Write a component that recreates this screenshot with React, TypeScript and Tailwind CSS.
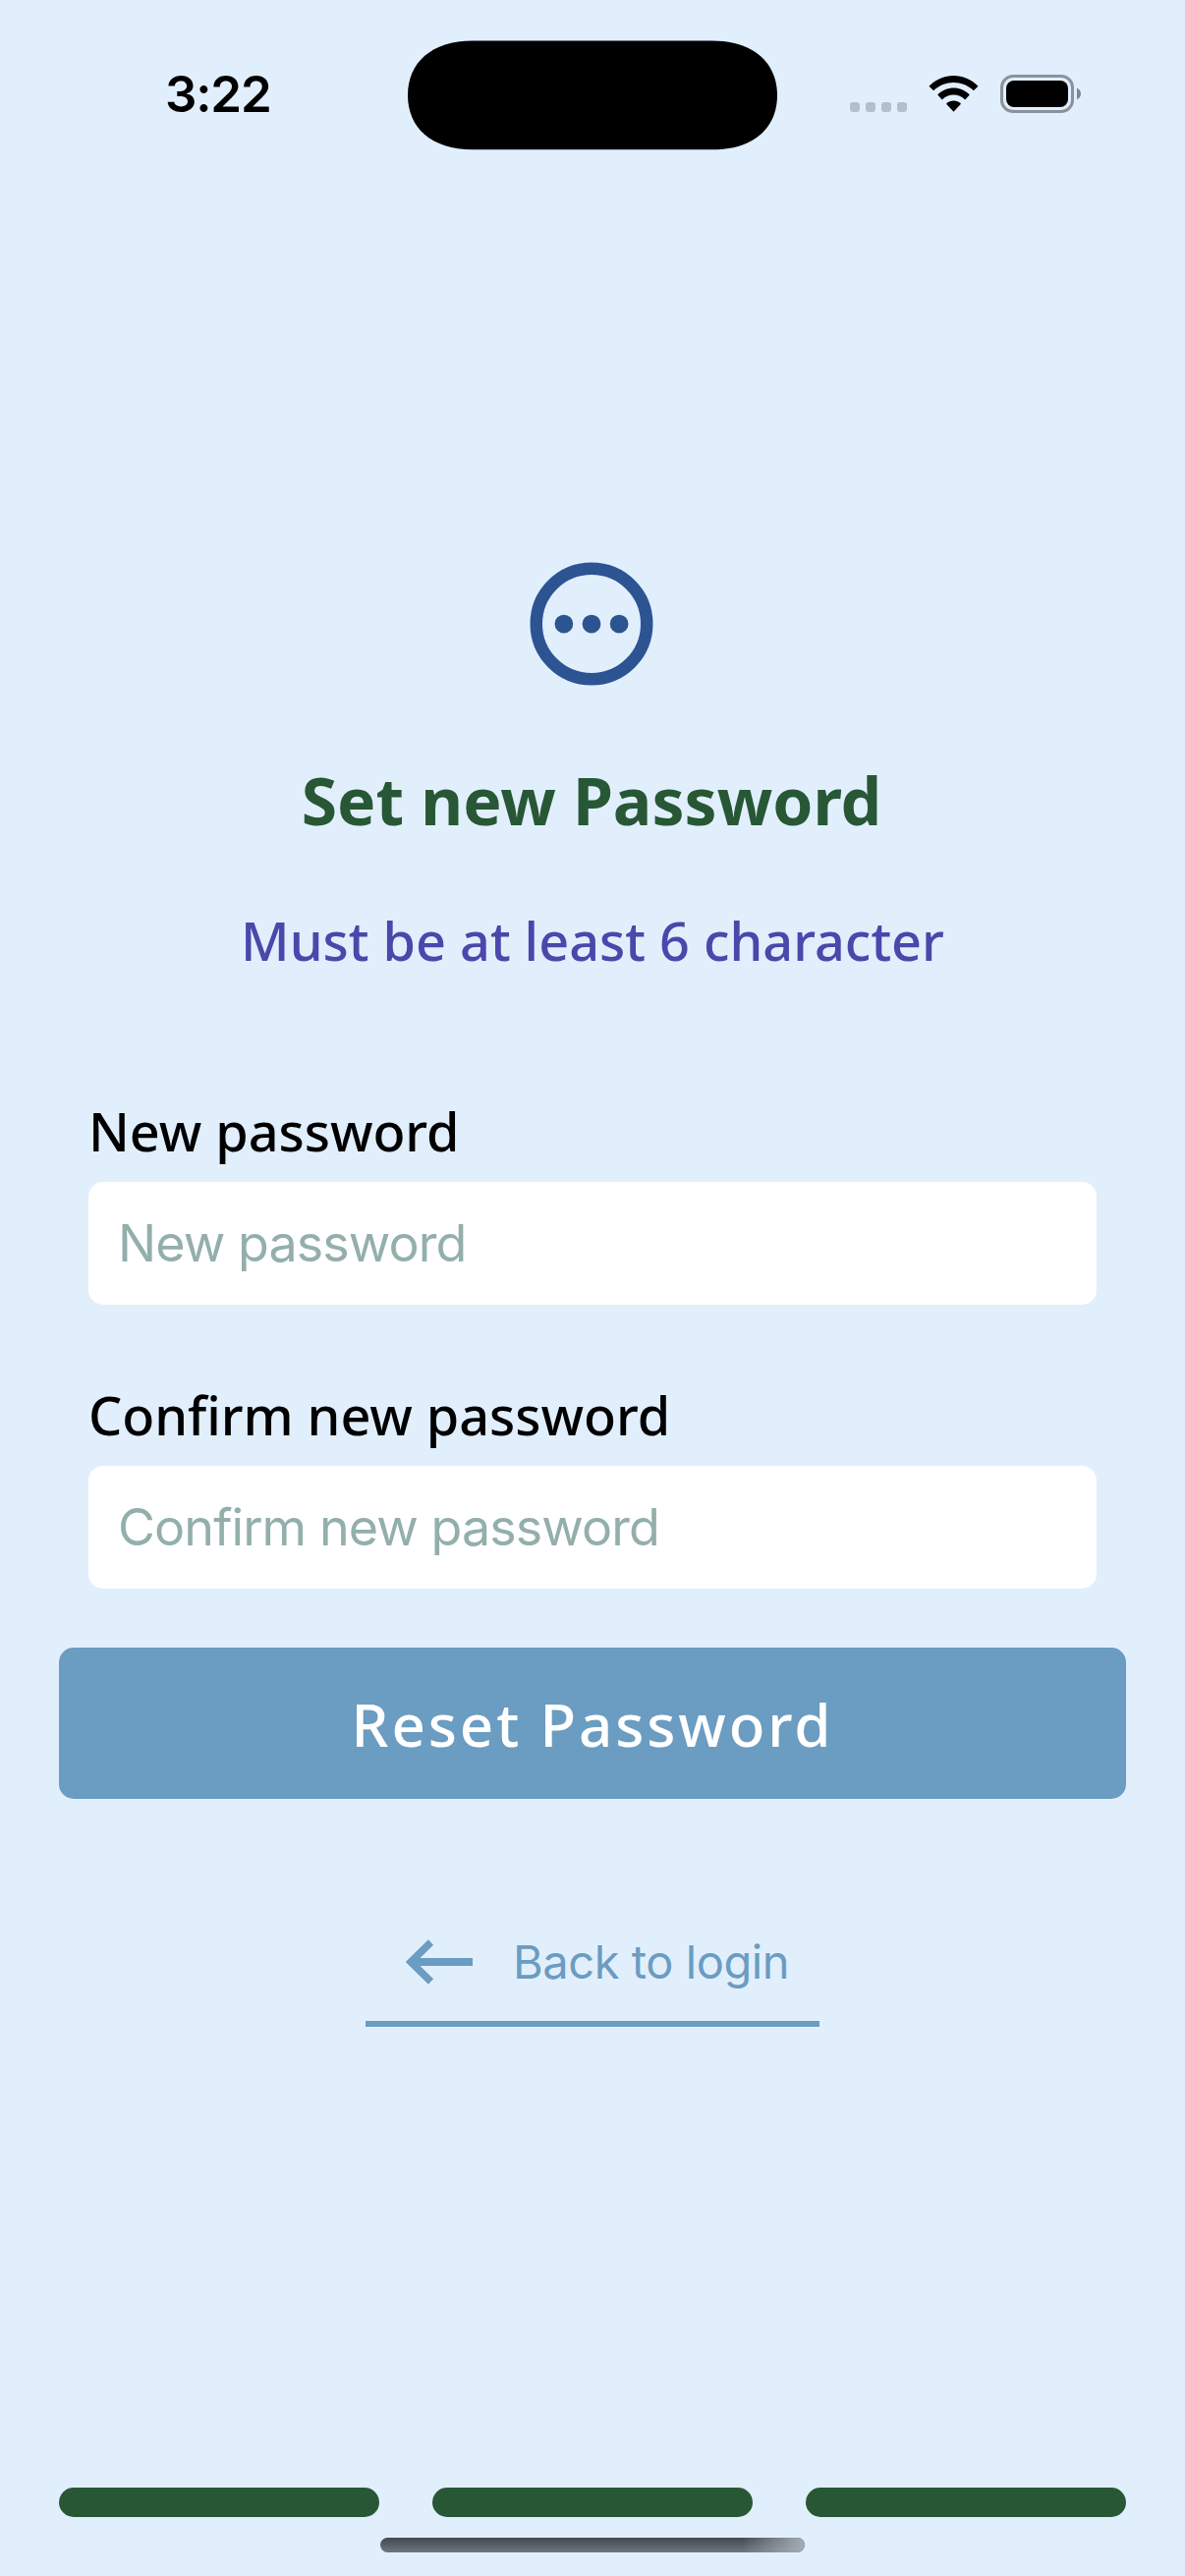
import React from "react";

function StatusBar() {
  return (
    <header className="grid h-[153px] grid-cols-[415px_376px_1fr]">
      <div className="pl-[168px] pt-[65px] font-['Inter'] text-[51px] font-semibold leading-[62px] tracking-[-1.2px] text-black">
        3:22
      </div>
      <svg className="mt-[41px] h-[112px] w-[376px]" viewBox="0 0 376 112" aria-hidden="true">
        <path d="M66 .6H310C352 .6 376 23 376 56S352 111.3 310 111.3H66C24 111.3 0 89 0 56S24 .6 66 .6Z" fill="#000" />
      </svg>
      <div className="flex pl-[74px]">
        <div className="mt-[104px] flex h-[10px] gap-[6px]">
          {[0, 1, 2, 3].map((i) => (
            <span key={i} className="size-[10px] rounded-[3px] bg-[#b4bfca]" />
          ))}
        </div>
        <svg className="ml-[22px] mt-[76px] h-[39px] w-[51px]" viewBox="0 0 51 39" aria-hidden="true">
          <path d="M.5 11.8C14.5-2.5 36.5-2.5 50.5 11.8L45.9 16.3C34.5 5.2 16.5 5.2 5.1 16.3Z" />
          <path d="M9.2 20.5C18.2 11.3 32.8 11.3 41.8 20.5L37.2 25.4C30.8 18.9 20.2 18.9 13.8 25.4Z" />
          <path d="M18 29.7C22 25.3 29 25.3 33 29.7L25.5 37.8Z" />
        </svg>
        <svg className="ml-[22px] mt-[76px] h-[39px] w-[82px]" viewBox="0 0 82 39" aria-hidden="true">
          <rect x="1.5" y="1.5" width="72" height="36" rx="11.5" fill="none" stroke="#8b929b" strokeWidth="3" />
          <rect x="6" y="6" width="63" height="27" rx="8" />
          <path d="M78 13.5C83.3 16 83.3 23 78 25.5Z" fill="#7f868e" />
        </svg>
      </div>
    </header>
  );
}

function PasswordField({ label, id }: { label: string; id: string }) {
  return (
    <div className="flex flex-col gap-[15px]">
      <label
        htmlFor={id}
        className="whitespace-nowrap font-['Noto_Sans'] text-[54px] font-medium leading-[74px] tracking-[-0.05px] text-black"
      >
        {label}
      </label>
      <input
        id={id}
        type="password"
        placeholder={label}
        className="h-[125px] w-full rounded-[15px] bg-white px-[30px] font-['Inter'] text-[52px] tracking-[-0.92px] outline-none placeholder:text-[#93afab] placeholder:opacity-100"
      />
    </div>
  );
}

export default function App() {
  return (
    <div className="flex h-[2622px] w-[1206px] flex-col overflow-hidden bg-[#e1effd]">
      <StatusBar />
      <main className="flex flex-col px-[60px]">
        <svg className="ml-[467px] mt-[407px] size-[150px]" viewBox="0 0 24 24" fill="#2d5492" aria-hidden="true">
          <circle cx="12" cy="12" r="9" fill="none" stroke="#2d5492" strokeWidth="2" />
          <circle cx="7.5" cy="12" r="1.5" />
          <circle cx="12" cy="12" r="1.5" />
          <circle cx="16.5" cy="12" r="1.5" />
        </svg>
        <h1 className="mt-[64px] whitespace-nowrap pr-[2px] text-center font-['Noto_Sans'] text-[66px] font-bold leading-[80px] text-[#285736]">
          Set new Password
        </h1>
        <p className="mt-[66px] whitespace-nowrap text-center font-['Noto_Sans'] text-[54px] font-medium leading-[74px] text-[#4b47ab]">
          Must be at least 6 character
        </p>
        <form className="mt-[120px] flex flex-col">
          <div className="flex flex-col gap-[75px] px-[30px]">
            <PasswordField id="new-password" label="New password" />
            <PasswordField id="confirm-password" label="Confirm new password" />
          </div>
          <button
            type="button"
            className="mt-[60px] h-[154px] rounded-[15px] bg-[#6b9cc1] pt-[2px] font-['Noto_Sans'] text-[60px] font-medium tracking-[2.9px] text-white"
          >
            Reset Password
          </button>
        </form>
        <a className="mx-auto mt-[126px] flex h-[106px] w-[462px] border-b-[6px] border-[#6b9cc1] pl-[41px] text-[#6b9cc1]">
          <svg className="mt-[17px] h-[46px] w-[69px]" viewBox="0 0 69 46" fill="none" stroke="currentColor" aria-hidden="true">
            <path d="M25.5 3L5 23L25.5 43" strokeWidth="7.4" />
            <path d="M7 23H68" strokeWidth="8" />
          </svg>
          <span className="ml-[40px] whitespace-nowrap font-['Inter'] text-[47px] leading-[80px] tracking-[-0.45px]">
            Back to login
          </span>
        </a>
        <div className="mt-[469px] grid grid-cols-3 gap-[54px]">
          <span className="h-[30px] rounded-full bg-[#285736]" />
          <span className="h-[30px] rounded-full bg-[#285736]" />
          <span className="h-[30px] rounded-full bg-[#285736]" />
        </div>
      </main>
      <div className="mx-auto mt-[21px] h-[15px] w-[432px] overflow-hidden rounded-full bg-linear-to-b from-[#45494e] to-[#6e7680]">
        <div className="ml-auto h-full w-[64px] bg-linear-to-r from-[#a3adb9]/0 to-[#a3adb9]" />
      </div>
    </div>
  );
}
